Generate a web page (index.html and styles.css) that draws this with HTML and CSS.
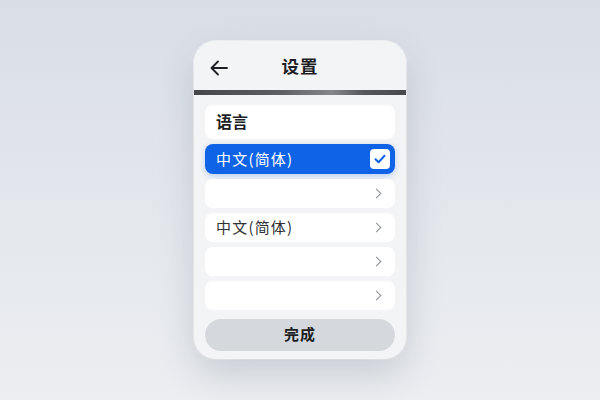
FILE: index.html
```html
<!DOCTYPE html>
<html lang="zh-CN">
<head>
    <meta charset="UTF-8">
    <meta name="viewport" content="width=device-width, initial-scale=1.0">
    <title>设置</title>
    <link rel="stylesheet" href="styles.css">
</head>
<body>

<div class="phone">
    <header class="topbar">
        <span class="back">
            <svg width="20" height="16" viewBox="0 0 20 16"><path d="M18 8H2.5M9 1.5L2.5 8L9 14.5" fill="none" stroke="#1d1f24" stroke-width="1.8" stroke-linecap="round" stroke-linejoin="round"/></svg>
        </span>
        <h1>设置</h1>
    </header>
    <div class="divider"></div>

    <div class="list">
        <div class="row title">语言</div>
        <div class="row active">
            <span>中文(简体)</span>
            <span class="check">
                <svg width="12" height="10" viewBox="0 0 12 10"><path d="M1.5 5.2L4.6 8.2L10.5 1.8" fill="none" stroke="#0f63e6" stroke-width="2" stroke-linecap="round" stroke-linejoin="round"/></svg>
            </span>
        </div>
        <div class="row"><span></span><i class="chev"></i></div>
        <div class="row"><span>中文(简体)</span><i class="chev"></i></div>
        <div class="row"><span></span><i class="chev"></i></div>
        <div class="row"><span></span><i class="chev"></i></div>
    </div>

    <button class="done">完成</button>
</div>

</body>
</html>
```

FILE: styles.css
```css
:root { --blue: #0f63e6; --card: #f3f4f6; --text: #1d1f24; }
html, body { height: 100%; }
body { margin: 0; font-family: "Noto Sans CJK SC", "Noto Sans", sans-serif; background: linear-gradient(180deg, #d9dee6 0%, #e5e8ed 60%, #eceef1 100%); display: flex; align-items: center; justify-content: center; }

.phone { width: 212px; height: 318px; box-sizing: border-box; background: var(--card); border-radius: 22px; box-shadow: 0 16px 36px rgba(70,80,100,0.2), 0 0 0 1px rgba(255,255,255,0.6); display: flex; flex-direction: column; overflow: hidden; }

.topbar { height: 49px; display: flex; align-items: center; justify-content: center; position: relative; }
.topbar h1 { margin: 0; font-size: 17.5px; font-weight: 700; color: var(--text); letter-spacing: 1px; }
.back { position: absolute; left: 15px; top: 19px; display: flex; }

.divider { height: 5px; background: linear-gradient(90deg, #45474b 0%, #5c5e62 40%, #85878a 65%, #55575a 80%, #48494c 100%); }

.list { display: flex; flex-direction: column; gap: 5px; padding: 10px 11px 0; }
.row { height: 29px; box-sizing: border-box; background: #fff; border-radius: 8px; display: flex; align-items: center; justify-content: space-between; padding: 0 11px 2px 11px; font-size: 15px; color: #303236; }
.row span { letter-spacing: 1.2px; }
.row .check { letter-spacing: 0; }
.row.title { height: 34px; font-size: 16px; font-weight: 700; color: var(--text); }
.row.active { height: 30px; background: var(--blue); color: #fff; padding: 0 5px 0 11px; box-shadow: 0 2px 6px rgba(15,99,230,0.25); }
.row.active > span:first-child { margin-top: -2px; }

.check { width: 20px; height: 20px; background: #fff; border-radius: 4px; display: flex; align-items: center; justify-content: center; }

.chev { width: 6px; height: 6px; border-right: 1.4px solid #8a8d93; border-top: 1.4px solid #8a8d93; transform: rotate(45deg); margin: 2px 4px 0 0; }

.done { margin: 9px 11px 0; height: 32px; padding: 0 0 3px; border: none; border-radius: 16px; background: #d5d9de; font-family: inherit; font-size: 15px; font-weight: 700; color: var(--text); letter-spacing: 1px; }
```
